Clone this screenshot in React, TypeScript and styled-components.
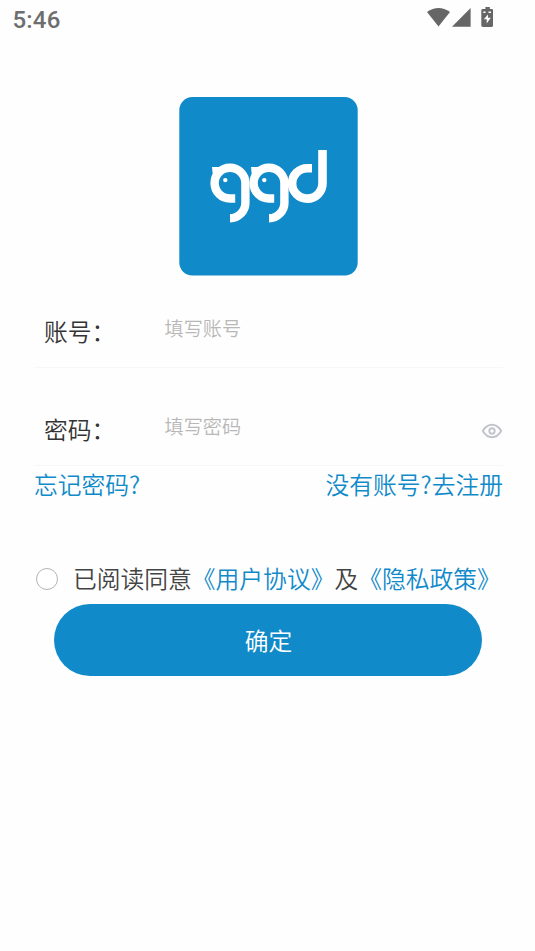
import React, { useState } from 'react';
import styled, { createGlobalStyle } from 'styled-components';

const BLUE = '#118ac9';

const GlobalStyle = createGlobalStyle`
  * { box-sizing: border-box; }
  body {
    margin: 0;
    background: #fefefe;
    font-family: "Noto Sans CJK SC", sans-serif;
    font-weight: 350;
    text-spacing-trim: space-all;
  }
`;

const Screen = styled.main`
  width: 535px;
  height: 951px;
  display: flex;
  flex-direction: column;
  overflow: hidden;
`;

const StatusBar = styled.header`
  height: 97px;
  padding: 6px 40px 0 12.5px;
  display: flex;
  align-items: flex-start;
  justify-content: space-between;
`;

const Clock = styled.time`
  font: 500 24px/28px Roboto, sans-serif;
  letter-spacing: 0.2px;
  color: #6e6e6e;
`;

const StatusIcons = styled.svg`
  display: block;
  width: 68px;
  height: 22px;
  fill: #666;
`;

const Logo = styled.svg`
  display: block;
  width: 179px;
  height: 179px;
  margin-left: 179px;
`;

const Form = styled.form`
  padding: 0 32px 0 34px;
  display: flex;
  flex-direction: column;
`;

const Field = styled.label<{ $first?: boolean }>`
  height: ${(p) => (p.$first ? 92 : 98)}px;
  padding: ${(p) => (p.$first ? 37 : 43)}px 0 0 10px;
  display: flex;
  align-items: flex-start;
  border-bottom: 1px solid #f7f7f7;
`;

const FieldName = styled.span`
  width: 120.5px;
  font-size: 23.78px;
  line-height: 36px;
  color: #333;
`;

const Input = styled.input`
  flex: 1;
  min-width: 0;
  height: 30px;
  padding: 0;
  border: 0;
  outline: 0;
  background: transparent;
  font: 350 19.2px/30px "Noto Sans CJK SC", sans-serif;
  color: #333;
  &::placeholder { color: #b8b8b8; opacity: 1; }
`;

const EyeButton = styled.button`
  margin: 12px 0 0;
  padding: 0;
  border: 0;
  background: none;
  display: flex;
`;

const Links = styled.nav`
  height: 36px;
  display: flex;
  justify-content: space-between;
`;

const Link = styled.a`
  font-size: 23.78px;
  line-height: 36px;
  color: ${BLUE};
  white-space: nowrap;
`;

const Agreement = styled.div`
  height: 36px;
  margin-top: 58px;
  padding-left: 2px;
  display: flex;
  align-items: center;
  font-size: 23.78px;
  line-height: 36px;
  color: #444;
  white-space: nowrap;
`;

const Radio = styled.button<{ $on: boolean }>`
  width: 22px;
  height: 22px;
  margin: 2px 15px 0 0;
  padding: 0;
  flex: none;
  border: 1.5px solid ${(p) => (p.$on ? BLUE : '#b4b4b4')};
  border-radius: 50%;
  background: ${(p) => (p.$on ? BLUE : '#fff')};
`;

const Submit = styled.button`
  width: 428.2px;
  height: 71.5px;
  margin: 8px 0 0 20.3px;
  padding: 0;
  border: 0;
  border-radius: 36px;
  background: ${BLUE};
  color: #fff;
  font: 350 23.78px/71px "Noto Sans CJK SC", sans-serif;
`;

const BirdLetter = ({ x }: { x: number }) => (
  <g transform={`translate(${x} 0)`}>
    <path d="M56.2 101.5H51A15.4 15.4 0 1 1 66.4 86V106C66.4 114 59.5 121.3 51 121.3" fill="none" stroke="#fff" strokeWidth="8.4" />
    <path d="M33 70H43V77L34 80Z" fill="#fff" />
    <circle cx="46.3" cy="83.1" r="2.2" fill="#fff" />
  </g>
);

export default function App() {
  const [agreed, setAgreed] = useState(false);
  const [visible, setVisible] = useState(false);
  return (
    <>
      <GlobalStyle />
      <Screen>
        <StatusBar>
          <Clock>5:46</Clock>
          <StatusIcons viewBox="0 0 68 22">
            <path d="M0 6Q11.5 -2.2 23 6L11.5 20.5Z" />
            <path d="M25 20.8L43.6 2V20.8Z" />
            <path fillRule="evenodd" d="M56.5 3H58.4V1H62.8V3H64.8Q66 3 66 4.2V19.6Q66 21 64.8 21H55.8Q54.3 21 54.3 19.6V4.2Q54.3 3 55.8 3ZM61 8.5L56.8 13.2H59.7V17.5L63.8 11.8H61ZM56.3 5.6V7H58.6V5.6ZM61.5 5.6V7H64V5.6Z" />
          </StatusIcons>
        </StatusBar>
        <Logo viewBox="0 0 179 179" aria-label="ggd">
          <rect x=".3" y=".1" width="178.4" height="178.4" rx="13" fill={BLUE} />
          <BirdLetter x={0} />
          <BirdLetter x={39} />
          <path d="M133 71.2H128.4A15.2 15.2 0 1 0 143.5 86.3V53" fill="none" stroke="#fff" strokeWidth="8.6" />
        </Logo>
        <Form onSubmit={(e) => e.preventDefault()}>
          <Field $first>
            <FieldName>账号：</FieldName>
            <Input placeholder="填写账号" />
          </Field>
          <Field>
            <FieldName>密码：</FieldName>
            <Input type={visible ? 'text' : 'password'} placeholder="填写密码" />
            <EyeButton type="button" aria-label="显示密码" onClick={() => setVisible(!visible)}>
              <svg width="22" height="16" viewBox="0 0 22 16" fill="none" stroke="#c2c4cc" strokeWidth="1.9">
                <path d="M1.8 8Q5.4 1.8 11 1.8T20.2 8Q16.6 14.2 11 14.2T1.8 8Z" />
                <circle cx="11" cy="8" r="2.7" />
              </svg>
            </EyeButton>
          </Field>
          <Links>
            <Link>忘记密码?</Link>
            <Link>没有账号?去注册</Link>
          </Links>
          <Agreement>
            <Radio type="button" $on={agreed} aria-label="同意" onClick={() => setAgreed(!agreed)} />
            <span>已阅读同意</span>
            <Link>《用户协议》</Link>
            <span>及</span>
            <Link>《隐私政策》</Link>
          </Agreement>
          <Submit>确定</Submit>
        </Form>
      </Screen>
    </>
  );
}
